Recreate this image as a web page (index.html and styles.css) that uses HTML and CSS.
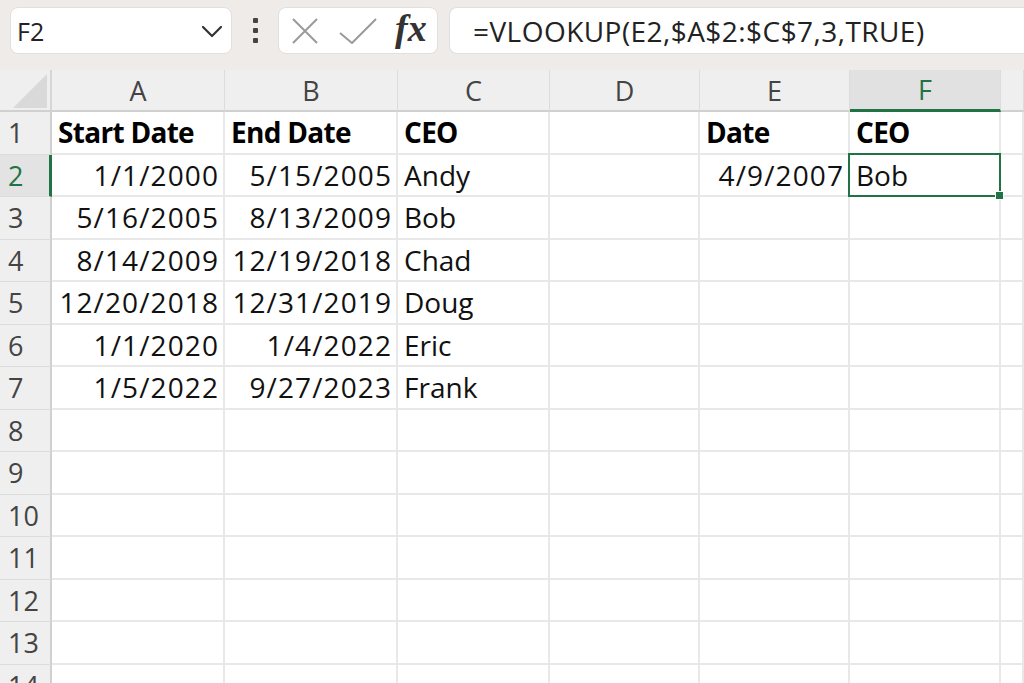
FILE: index.html
```html
<!DOCTYPE html>
<html>
<head>
<meta charset="utf-8">
<link rel="stylesheet" href="styles.css">
</head>
<body>
<div class="toolbar">
  <div class="namebox">
    <span class="ref">F2</span>
    <svg class="chev" width="22" height="13" viewBox="0 0 22 13"><path d="M2 2 L11 11 L20 2" fill="none" stroke="#333" stroke-width="2.2" stroke-linecap="round" stroke-linejoin="round"/></svg>
  </div>
  <div class="dots"><i></i><i></i><i></i></div>
  <div class="fxbox">
    <svg width="28" height="28" viewBox="0 0 28 28"><path d="M2 2 L26 26 M26 2 L2 26" stroke="#9a9a9a" stroke-width="2" fill="none"/></svg>
    <svg width="38" height="26" viewBox="0 0 38 26"><path d="M1 15 L13 25 L37 1" stroke="#9a9a9a" stroke-width="2" fill="none"/></svg>
    <span class="fx">fx</span>
  </div>
  <div class="formula">=VLOOKUP(E2,$A$2:$C$7,3,TRUE)</div>
</div>
<div class="sheet">
  <div class="corner"><span class="tri"></span></div>
  <div class="ch">A</div><div class="ch">B</div><div class="ch">C</div><div class="ch">D</div><div class="ch">E</div><div class="ch act">F</div><div class="ch"></div>

  <div class="rh">1</div>
  <div class="c b">Start Date</div><div class="c b">End Date</div><div class="c b">CEO</div><div class="c"></div><div class="c b">Date</div><div class="c b">CEO</div><div class="c"></div>

  <div class="rh act">2</div>
  <div class="c n">1/1/2000</div><div class="c n">5/15/2005</div><div class="c">Andy</div><div class="c"></div><div class="c n">4/9/2007</div><div class="c sel">Bob</div><div class="c"></div>

  <div class="rh">3</div>
  <div class="c n">5/16/2005</div><div class="c n">8/13/2009</div><div class="c">Bob</div><div class="c"></div><div class="c"></div><div class="c"></div><div class="c"></div>

  <div class="rh">4</div>
  <div class="c n">8/14/2009</div><div class="c n">12/19/2018</div><div class="c">Chad</div><div class="c"></div><div class="c"></div><div class="c"></div><div class="c"></div>

  <div class="rh">5</div>
  <div class="c n">12/20/2018</div><div class="c n">12/31/2019</div><div class="c">Doug</div><div class="c"></div><div class="c"></div><div class="c"></div><div class="c"></div>

  <div class="rh">6</div>
  <div class="c n">1/1/2020</div><div class="c n">1/4/2022</div><div class="c">Eric</div><div class="c"></div><div class="c"></div><div class="c"></div><div class="c"></div>

  <div class="rh">7</div>
  <div class="c n">1/5/2022</div><div class="c n">9/27/2023</div><div class="c">Frank</div><div class="c"></div><div class="c"></div><div class="c"></div><div class="c"></div>

  <div class="rh">8</div>
  <div class="c"></div><div class="c"></div><div class="c"></div><div class="c"></div><div class="c"></div><div class="c"></div><div class="c"></div>
  <div class="rh">9</div>
  <div class="c"></div><div class="c"></div><div class="c"></div><div class="c"></div><div class="c"></div><div class="c"></div><div class="c"></div>
  <div class="rh">10</div>
  <div class="c"></div><div class="c"></div><div class="c"></div><div class="c"></div><div class="c"></div><div class="c"></div><div class="c"></div>
  <div class="rh">11</div>
  <div class="c"></div><div class="c"></div><div class="c"></div><div class="c"></div><div class="c"></div><div class="c"></div><div class="c"></div>
  <div class="rh">12</div>
  <div class="c"></div><div class="c"></div><div class="c"></div><div class="c"></div><div class="c"></div><div class="c"></div><div class="c"></div>
  <div class="rh">13</div>
  <div class="c"></div><div class="c"></div><div class="c"></div><div class="c"></div><div class="c"></div><div class="c"></div><div class="c"></div>
  <div class="rh">14</div>
  <div class="c"></div><div class="c"></div><div class="c"></div><div class="c"></div><div class="c"></div><div class="c"></div><div class="c"></div>
</div>
</body>
</html>
```
FILE: styles.css
```css
html, body {
  margin: 0;
  padding: 0;
  width: 1024px;
  height: 683px;
  overflow: hidden;
  background: #ffffff;
  font-family: "Open Sans", "Noto Sans", sans-serif;
}

.toolbar {
  height: 70px;
  background: #eeebe9;
  display: flex;
  align-items: flex-start;
  padding: 7px 0 0 10px;
  box-sizing: border-box;
}

.namebox {
  width: 222px;
  height: 47px;
  box-sizing: border-box;
  background: #fff;
  border: 1px solid #e2dfdd;
  border-radius: 8px;
  display: flex;
  align-items: center;
  justify-content: space-between;
  padding: 0 8px 0 6px;
}

.ref {
  font-size: 25px;
  color: #222;
}

.chev {
  margin-top: 2px;
}

.dots {
  width: 46px;
  height: 47px;
  display: flex;
  flex-direction: column;
  align-items: center;
  justify-content: center;
  gap: 5px;
}

.dots i {
  display: block;
  width: 5px;
  height: 5px;
  border-radius: 1px;
  background: #444;
}

.fxbox {
  width: 160px;
  height: 47px;
  box-sizing: border-box;
  background: #fff;
  border: 1px solid #e2dfdd;
  border-radius: 8px;
  display: flex;
  align-items: center;
  padding-left: 12px;
  gap: 20px;
}

.fx {
  font-family: "Liberation Serif", "DejaVu Serif", serif;
  font-style: italic;
  font-weight: 700;
  font-size: 38px;
  color: #333;
  margin-left: -2px;
  line-height: 1;
  margin-top: -6px;
}

.formula {
  flex: 1;
  height: 47px;
  margin-left: 11px;
  box-sizing: border-box;
  background: #fff;
  border: 1px solid #e2dfdd;
  border-right: none;
  border-radius: 8px 0 0 8px;
  display: flex;
  align-items: center;
  padding-left: 23px;
  font-size: 28px;
  letter-spacing: 0.45px;
  color: #222;
}

.sheet {
  display: grid;
  grid-template-columns: 52px 173px 173px 152px 150px 150px 151px 1fr;
  grid-template-rows: 42px;
  grid-auto-rows: 42.5px;
}

.corner {
  background: #efefef;
  border-right: 2px solid #d6d6d6;
  border-bottom: 2px solid #d0d0d0;
  box-sizing: border-box;
  position: relative;
}

.tri {
  position: absolute;
  right: 3px;
  bottom: 2px;
  width: 34px;
  height: 34px;
  background: #d9d9d9;
  clip-path: polygon(100% 0, 100% 100%, 0 100%);
}

.ch {
  background: #efefef;
  border-right: 1px solid #dcdcdc;
  border-bottom: 2px solid #d0d0d0;
  box-sizing: border-box;
  display: flex;
  align-items: center;
  justify-content: center;
  font-size: 27px;
  color: #444;
}

.ch.act {
  background: #e1e1e1;
  color: #217346;
  border-bottom: 3px solid #217346;
}

.rh {
  background: #efefef;
  border-right: 2px solid #d0d0d0;
  border-bottom: 1px solid #dcdcdc;
  box-sizing: border-box;
  display: flex;
  align-items: center;
  padding-left: 8px;
  font-size: 27px;
  color: #444;
}

.rh.act {
  background: #e3e3e3;
  color: #217346;
  border-right: 3px solid #217346;
}

.c {
  border-right: 2px solid #e8e8e8;
  border-bottom: 2px solid #e8e8e8;
  box-sizing: border-box;
  display: flex;
  align-items: center;
  padding: 0 5px 0 6px;
  font-size: 28px;
  color: #111;
  white-space: nowrap;
  overflow: visible;
}

.c.n {
  justify-content: flex-end;
  letter-spacing: 1.1px;
  padding-right: 4px;
}

.c.b {
  font-weight: 700;
  letter-spacing: -0.7px;
  color: #000;
}

.c.sel {
  position: relative;
}

.c.sel::before {
  content: "";
  position: absolute;
  left: -2px;
  top: -2px;
  right: -2px;
  bottom: -2px;
  border: 2.5px solid #217346;
}

.c.sel::after {
  content: "";
  position: absolute;
  right: -5px;
  bottom: -5px;
  width: 7px;
  height: 7px;
  background: #217346;
  border: 1px solid #fff;
}
```
